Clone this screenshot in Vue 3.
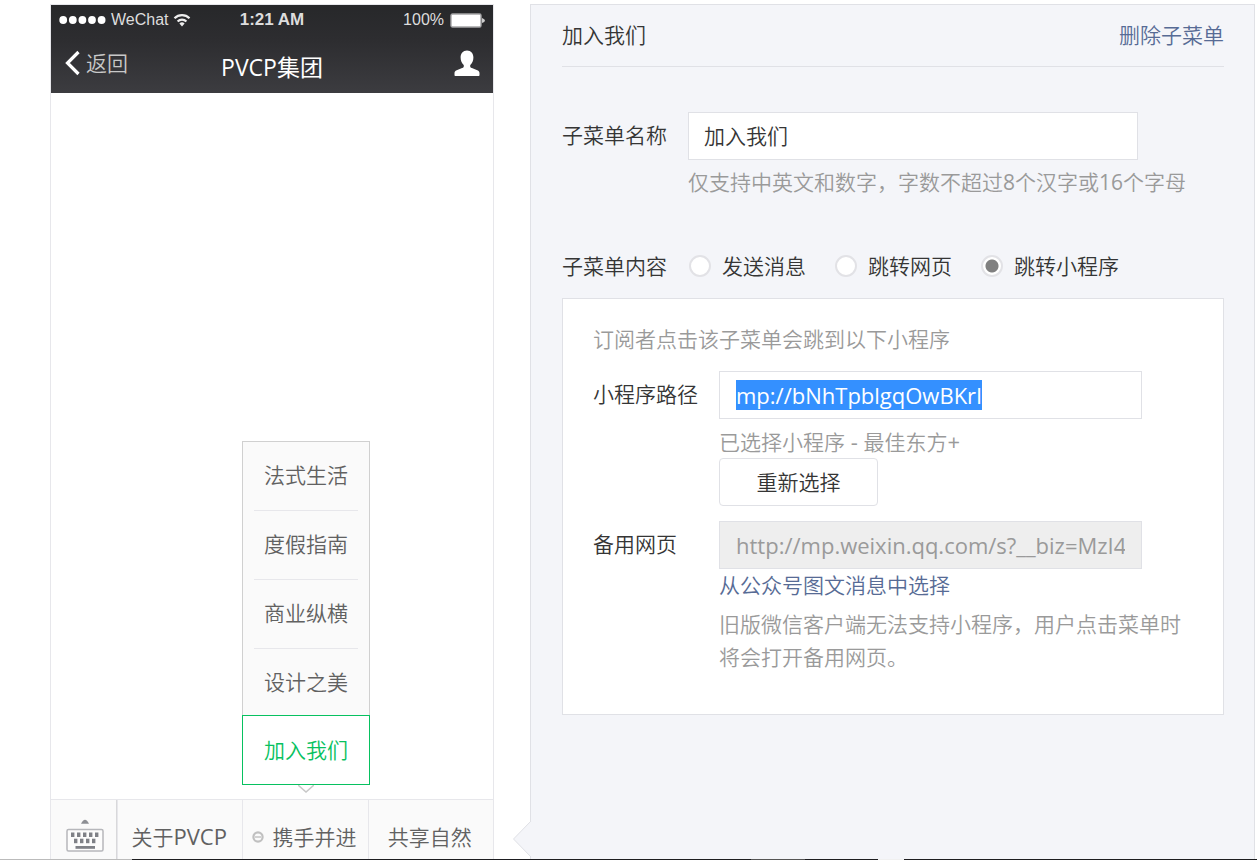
<script setup>
import { onMounted, ref } from 'vue'

const submenu = ['法式生活', '度假指南', '商业纵横', '设计之美', '加入我们']
const selected = ref('加入我们')
const name = ref('加入我们')
const contentTypes = ['发送消息', '跳转网页', '跳转小程序']
const contentType = ref('跳转小程序')
const path = ref('mp://bNhTpblgqOwBKrI')
const backup = ref('http://mp.weixin.qq.com/s?__biz=MzI4')
const pathInput = ref(null)

const keysTop = [5, 11, 17, 23, 29]
const keysBottom = [8, 14, 20, 26]

onMounted(() => {
  pathInput.value.focus()
  pathInput.value.select()
})
</script>

<template>
  <div class="page">
    <main class="workspace">
      <section class="phone">
        <header class="phone-head">
          <div class="status">
            <span class="carrier">
              <svg width="48" height="10" viewBox="0 0 48 10" fill="#fff">
                <circle v-for="i in 5" :key="i" :cx="i * 9.6 - 5.4" cy="5" r="3.9" />
              </svg>
              <span>WeChat</span>
              <svg width="18" height="14" viewBox="0 0 18 14" fill="none" stroke="#eee" stroke-width="2.2">
                <path d="M1.5 5.2a10.6 10.6 0 0 1 15 0" />
                <path d="M4.6 8.4a6.2 6.2 0 0 1 8.8 0" />
                <path d="M9 13.4 6.4 10.6a3.7 3.7 0 0 1 5.2 0z" fill="#eee" stroke="none" />
              </svg>
            </span>
            <strong class="clock">1:21 AM</strong>
            <span class="power">
              <span>100%</span>
              <svg width="35" height="15" viewBox="0 0 35 15">
                <rect x="1" y="1" width="30" height="13" rx="1.5" fill="#fff" stroke="#a5a5a7" stroke-width="1.4" />
                <path d="M32 5q3 1 3 2.500t-3 2.500z" fill="#ccc" />
              </svg>
            </span>
          </div>
          <div class="nav">
            <button type="button" class="back">
              <svg width="17" height="26" viewBox="0 0 17 26" fill="none" stroke="#fff" stroke-width="3.200">
                <path d="M14.500 2 3.500 13l11 11" />
              </svg>
              <span>返回</span>
            </button>
            <h1>PVCP集团</h1>
            <button type="button" class="profile" aria-label="用户">
              <svg width="26" height="27" viewBox="0 0 26 27" fill="#fff">
                <path d="M13 0.500c4 0 6.400 2.900 6.400 7 0 3-1.200 5.800-3.100 7.400-.5 1.500.1 2.600 1.600 3.200l5.400 2.200c1.600.7 2.200 1.600 2.200 3v1.700c0 .7-.4 1-1 1H1.500c-.6 0-1-.3-1-1v-1.700c0-1.400.6-2.300 2.200-3l5.400-2.200c1.500-.6 2.100-1.700 1.600-3.200-1.900-1.600-3.100-4.400-3.100-7.400 0-4.100 2.400-7 6.400-7z" />
              </svg>
            </button>
          </div>
        </header>

        <div class="phone-body"></div>

        <nav class="tabs">
          <button type="button" class="tab keyboard" aria-label="键盘">
            <svg width="38" height="35" viewBox="0 0 38 35">
              <path d="M15 5.800q4-8 8 0z" fill="#8d8f94" />
              <rect x="1" y="11.500" width="36" height="21.500" rx="1.500" fill="#fcfcfc" stroke="#b6b7bb" stroke-width="1.500" />
              <g fill="#7f8187">
                <rect v-for="x in keysTop" :key="'t' + x" :x="x" y="14.500" width="3.400" height="4.500" />
                <rect v-for="x in keysBottom" :key="'b' + x" :x="x" y="20.700" width="3.400" height="4.500" />
                <rect x="9.500" y="28" width="19.500" height="2.800" />
              </g>
            </svg>
          </button>
          <div class="tab"><button type="button" class="tab-btn"><span>关于<span class="latin">PVCP</span></span></button></div>
          <div class="tab">
            <button type="button" class="tab-btn">
              <svg width="12" height="12" viewBox="0 0 12 12" fill="none" stroke="#c0c0c0" stroke-width="2.200">
                <circle cx="6" cy="6" r="4.600" />
                <path d="M3 6h6" stroke-width="1.400" />
              </svg>
              <span>携手并进</span>
            </button>
            <ul class="submenu">
              <li v-for="item in submenu" :key="item" :class="{ active: item === selected }">
                <button type="button" @click="selected = item">{{ item }}</button>
              </li>
            </ul>
            <svg class="submenu-arrow" width="16" height="8" viewBox="0 0 16 8">
              <path d="M0 0l8 7 8-7" fill="#fff" stroke="#c8c8c8" stroke-width="1.500" />
            </svg>
          </div>
          <div class="tab"><button type="button" class="tab-btn">共享自然</button></div>
        </nav>
      </section>

      <section class="panel">
        <svg class="panel-arrow" width="20" height="38" viewBox="0 0 20 38">
          <path d="M20 0 1.500 19 20 38z" fill="#f4f5f9" />
          <path d="M19 1 1.500 19 19 37" fill="none" stroke="#e0e1e6" />
        </svg>
        <header class="panel-head">
          <h2>加入我们</h2>
          <a href="#">删除子菜单</a>
        </header>

        <form class="form" @submit.prevent>
          <div class="row name-row">
            <label class="label" for="menu-name">子菜单名称</label>
            <div class="control">
              <input id="menu-name" v-model="name" class="field name-field" type="text" />
              <p class="hint">仅支持中英文和数字，字数不超过<span class="inline-latin">8</span>个汉字或<span class="inline-latin">16</span>个字母</p>
            </div>
          </div>

          <div class="row type-row" role="radiogroup" aria-labelledby="type-label">
            <span id="type-label" class="label">子菜单内容</span>
            <div class="radios">
              <label v-for="type in contentTypes" :key="type">
                <input v-model="contentType" type="radio" name="type" :value="type" />
                <span>{{ type }}</span>
              </label>
            </div>
          </div>

          <div class="box">
            <p class="intro">订阅者点击该子菜单会跳到以下小程序</p>
            <div class="row">
              <label class="label" for="mini-path">小程序路径</label>
              <div class="control">
                <input id="mini-path" ref="pathInput" v-model="path" class="field latin" type="text" spellcheck="false" />
                <p class="hint">已选择小程序<span class="latin"> - </span>最佳东方<span class="latin">+</span></p>
                <button type="button" class="choose">重新选择</button>
              </div>
            </div>
            <div class="row backup-row">
              <label class="label" for="backup-url">备用网页</label>
              <div class="control">
                <input id="backup-url" v-model="backup" class="field latin" type="text" disabled />
                <a class="pick" href="#">从公众号图文消息中选择</a>
                <p class="note">旧版微信客户端无法支持小程序，用户点击菜单时将会打开备用网页。</p>
              </div>
            </div>
          </div>
        </form>
      </section>
    </main>
    <div class="edge"><i class="pale"></i><i class="dark"></i><i class="mid"></i><i class="dark short"></i><i class="gap"></i><i class="dark grow"></i></div>
  </div>
</template>

<style>
body {
  background: #fff;
}
</style>

<style scoped>
.page,
.page * {
  box-sizing: border-box;
}
.page {
  display: flex;
  flex-direction: column;
  height: 100vh;
  min-height: 780px;
  overflow: hidden;
  font-family: "Open Sans", "Noto Sans CJK SC", sans-serif;
  font-size: 21px;
  font-weight: 350;
  line-height: 32px;
  color: #353535;
}
h1,
h2,
p,
ul {
  margin: 0;
  padding: 0;
  font-size: inherit;
  font-weight: inherit;
}
button,
input {
  font: inherit;
  color: inherit;
}
button {
  padding: 0;
  border: 0;
  background: none;
  cursor: pointer;
}
a {
  color: #576b95;
  text-decoration: none;
}
svg {
  display: block;
  flex: none;
}
.latin {
  font-size: 22px;
  font-weight: 400;
}
.inline-latin {
  font-weight: 400;
}
.workspace {
  display: flex;
  flex: 1;
  gap: 36px;
  padding: 4px 2px 0 50px;
}

.phone {
  display: flex;
  flex-direction: column;
  flex: none;
  width: clamp(400px, 36vw, 444px);
  border: 1px solid #e7e7eb;
  border-bottom: 0;
}
.phone-head {
  height: 88px;
  color: #fff;
  background: linear-gradient(#27282a, #2d2d30 40%, #3c3c40);
}
.status {
  display: grid;
  grid-template-columns: 1fr auto 1fr;
  align-items: center;
  height: 30px;
  padding: 0 8px;
  font: 16px/20px "Liberation Sans", Arial, sans-serif;
  color: #ddd;
}
.carrier,
.power {
  display: flex;
  align-items: center;
  gap: 4px;
}
.power {
  justify-content: flex-end;
  gap: 6px;
}
.clock {
  font-size: 17px;
}
.nav {
  display: grid;
  grid-template-columns: 1fr auto 1fr;
  align-items: center;
  height: 56px;
  padding: 0 13px;
}
.back {
  display: flex;
  align-items: center;
  gap: 5px;
  color: #c8c8c8;
}
.nav h1 {
  padding-top: 8px;
  font-size: 23px;
  font-weight: 400;
}
.profile {
  justify-self: end;
}
.phone-body {
  flex: 1;
}
.tabs {
  display: flex;
  height: 60px;
  border-top: 1px solid #e7e7eb;
  background: #fafafa;
  color: #616161;
}
.tab {
  position: relative;
  flex: 1;
  border-left: 1px solid #e7e7eb;
}
.tab.keyboard {
  display: flex;
  flex: 0 0 66px;
  justify-content: center;
  padding: 18px 0 0 3px;
  border-left: 0;
  border-right: 1px solid #d8d8da;
}
.tab-btn {
  display: flex;
  align-items: center;
  justify-content: center;
  gap: 8px;
  width: 100%;
  height: 100%;
  padding: 14px 2px 0 0;
  white-space: nowrap;
}
.submenu {
  position: absolute;
  right: -2px;
  bottom: calc(100% + 15px);
  left: -1px;
  list-style: none;
  border: 1px solid #d0d0d0;
  border-bottom: 0;
  background: #fafafa;
}
.submenu li {
  height: 69px;
  padding: 0 11px;
}
.submenu button {
  width: 100%;
  height: 69px;
  padding-bottom: 2px;
  border-bottom: 1px solid #e7e7eb;
  white-space: nowrap;
}
.submenu li:nth-last-child(2) {
  height: 66px;
}
.submenu li:nth-last-child(2) button {
  border-bottom-color: transparent;
}
.submenu .active {
  position: relative;
  height: 70px;
  margin: 0 -1px;
  border: 1px solid #07c160;
  background: #fff;
  color: #07c160;
}
.submenu .active button {
  height: 68px;
  padding-bottom: 0;
  border: 0;
}
.submenu-arrow {
  position: absolute;
  bottom: calc(100% + 7px);
  left: calc(50% - 7px);
}

.panel {
  position: relative;
  flex: 1;
  min-width: 0;
  padding: 0 30px 0 31px;
  border: 1px solid #e0e1e6;
  border-bottom: 0;
  background: #f4f5f9;
}
.panel-arrow {
  position: absolute;
  bottom: 1px;
  left: -19px;
}
.panel-head {
  display: flex;
  align-items: center;
  justify-content: space-between;
  height: 62px;
  padding-bottom: 2px;
  border-bottom: 1px solid #e0e1e6;
}
.row {
  display: flex;
}
.label {
  flex: none;
  width: 126px;
  padding-top: 7px;
}
.control {
  flex: 1;
  min-width: 0;
}
.name-row {
  padding-top: 45px;
}
.field {
  display: block;
  width: 100%;
  max-width: 423px;
  height: 48px;
  padding: 0 16px;
  border: 1px solid #e0e1e6;
  border-radius: 0;
  outline: 0;
  background: #fff;
  line-height: 26px;
}
.field::selection {
  background: rgba(51, 144, 255, 0.996);
  color: #fff;
}
.name-field {
  max-width: 450px;
  padding: 0 15px 2px;
}
.field:disabled {
  background: #eee;
  color: #9a9a9a;
}
.hint,
.intro,
.note {
  color: #9a9a9a;
}
.hint {
  height: 39px;
  padding-top: 6px;
}
.type-row {
  align-items: center;
  height: 32px;
  margin-top: 51px;
}
.type-row .label {
  padding-top: 0;
}
.radios {
  display: flex;
  gap: 29px;
  padding-left: 1px;
}
.radios label {
  display: flex;
  align-items: center;
  gap: 11px;
  white-space: nowrap;
}
.radios input {
  flex: none;
  width: 22px;
  height: 22px;
  margin: 0;
  border: 2px solid #e2e2e6;
  border-radius: 50%;
  appearance: none;
  background: #fff;
}
.radios input:checked {
  background: radial-gradient(circle, #808080 6px, #fff 7px);
}
.box {
  margin-top: 16px;
  padding: 24px 30px 40px;
  border: 1px solid #e0e1e6;
  background: #fff;
}
.intro {
  padding-bottom: 16px;
}
.choose {
  display: block;
  width: 159px;
  height: 48px;
  border: 1px solid #e0e1e6;
  border-radius: 4px;
}
.backup-row {
  padding-top: 15px;
}
.pick {
  display: block;
}
.note {
  padding-top: 7px;
  line-height: 33px;
}

.edge {
  display: flex;
  flex: none;
  height: 1px;
}
.edge .pale {
  flex: 132;
  background: #bbb;
}
.edge .dark {
  flex: 619;
  background: #1d1d20;
}
.edge .mid {
  flex: 54;
  background: #555;
}
.edge .short {
  flex: 73;
}
.edge .gap {
  flex: 26;
  background: #f0f0f0;
}
.edge .grow {
  flex: 353;
}
</style>
